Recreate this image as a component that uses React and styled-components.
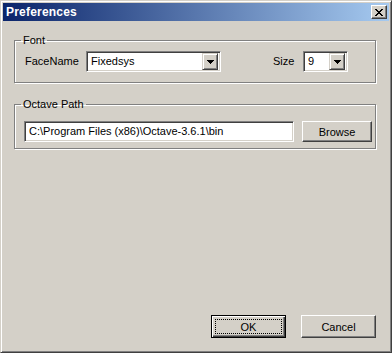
import React from 'react'
import styled, { createGlobalStyle } from 'styled-components'

const Global = createGlobalStyle`
    html, body {
        margin: 0;
        padding: 0;
        background: #d4d0c8;
    }
    * {
        box-sizing: border-box;
    }
`

const Window = styled.div`
    width: 392px;
    height: 353px;
    display: flex;
    flex-direction: column;
    background: #d4d0c8;
    border: 1px solid;
    border-color: #d4d0c8 #404040 #404040 #d4d0c8;
    box-shadow: inset 1px 1px #fff, inset -1px -1px #808080;
    padding: 2px;
    font-family: "Liberation Sans", Arial, sans-serif;
    font-size: 11px;
    color: #000;
`

const TitleBar = styled.div`
    height: 18px;
    display: flex;
    align-items: center;
    justify-content: space-between;
    padding: 0 2px 0 3px;
    background: linear-gradient(to right, #0a246a, #a6caf0);
`

const Title = styled.span`
    color: #fff;
    font-weight: bold;
    font-size: 12px;
    letter-spacing: 0.2px;
    line-height: 18px;
`

const CloseBtn = styled.button`
    width: 16px;
    height: 14px;
    padding: 0;
    display: flex;
    align-items: center;
    justify-content: center;
    background: #d4d0c8;
    border: 1px solid;
    border-color: #fff #404040 #404040 #fff;
    box-shadow: inset -1px -1px #808080;
`

const Body = styled.div`
    flex: 1;
    display: flex;
    flex-direction: column;
    padding: 13px 13px 12px 11px;
`

const Group = styled.fieldset`
    width: 362px;
    margin: 0 0 ${props => props.$gap || 0}px 0;
    padding: 0;
    min-width: 0;
    border: 1px solid #808080;
    box-shadow: inset 1px 1px #fff, 1px 1px #fff;
`

const Legend = styled.legend`
    margin-left: 6px;
    padding: 0 2px;
    line-height: 13px;
    font-size: 11px;
`

const Row = styled.div`
    display: flex;
    align-items: center;
    padding: ${props => props.$pad};
`

const Label = styled.span`
    width: ${props => props.$w}px;
    margin-left: ${props => props.$ml || 0}px;
    line-height: 13px;
`

const Sunken = styled.div`
    height: 21px;
    width: ${props => props.$w}px;
    display: flex;
    align-items: center;
    background: #fff;
    border: 1px solid;
    border-color: #808080 #fff #fff #808080;
    box-shadow: inset 1px 1px #404040, inset -1px -1px #d4d0c8;
    padding: 2px;
`

const FieldText = styled.span`
    flex: 1;
    padding-left: 2px;
    white-space: nowrap;
    overflow: hidden;
    line-height: 17px;
`

const DropBtn = styled.span`
    width: 16px;
    height: 17px;
    display: flex;
    align-items: center;
    justify-content: center;
    background: #d4d0c8;
    border: 1px solid;
    border-color: #d4d0c8 #404040 #404040 #d4d0c8;
    box-shadow: inset 1px 1px #fff, inset -1px -1px #808080;
`

const Button = styled.button`
    width: ${props => props.$w || 75}px;
    height: ${props => props.$h || 23}px;
    margin-left: ${props => props.$ml || 0}px;
    padding: 0;
    position: relative;
    font-family: "Liberation Sans", Arial, sans-serif;
    font-size: 11px;
    color: #000;
    background: #d4d0c8;
    border: 1px solid;
    border-color: ${props => props.$default ? '#000' : '#fff #404040 #404040 #fff'};
    box-shadow: ${props => props.$default
        ? 'inset 1px 1px #fff, inset -1px -1px #404040, inset -2px -2px #808080'
        : 'inset -1px -1px #808080'};
`

const Focus = styled.span`
    position: absolute;
    inset: 3px;
    border: 1px dotted #000;
    display: flex;
    align-items: center;
    justify-content: center;
`

const Footer = styled.div`
    margin-top: auto;
    display: flex;
    justify-content: flex-end;
`

const pixels = (rows) => {
    let d = ''
    rows.forEach((r, y) => {
        r.split('').forEach((c, x) => {
            if (c === '#') d += `M${x} ${y}h1v1h-1z`
        })
    })
    return d
}

const CloseGlyph = () => (
    <svg width="8" height="7" viewBox="0 0 8 7" shapeRendering="crispEdges">
        <path fill="#000" d={pixels([
            '##....##',
            '.##..##.',
            '..####..',
            '...##...',
            '..####..',
            '.##..##.',
            '##....##',
        ])} />
    </svg>
)

const Arrow = () => (
    <svg width="7" height="4" viewBox="0 0 7 4" shapeRendering="crispEdges">
        <path fill="#000" d={pixels([
            '#######',
            '.#####.',
            '..###..',
            '...#...',
        ])} />
    </svg>
)

function Combo({ width, value }) {
    return (
        <Sunken $w={width}>
            <FieldText>{value}</FieldText>
            <DropBtn><Arrow /></DropBtn>
        </Sunken>
    )
}

export default function App() {
    return (
        <>
            <Global />
            <Window>
                <TitleBar>
                    <Title>Preferences</Title>
                    <CloseBtn><CloseGlyph /></CloseBtn>
                </TitleBar>
                <Body>
                    <Group $gap={15}>
                        <Legend>Font</Legend>
                        <Row $pad="4px 0 10px 10px">
                            <Label $w={61}>FaceName</Label>
                            <Combo width={135} value="Fixedsys" />
                            <Label $w={30} $ml={52}>Size</Label>
                            <Combo width={45} value="9" />
                        </Row>
                    </Group>
                    <Group>
                        <Legend>Octave Path</Legend>
                        <Row $pad="10px 0 6px 9px">
                            <Sunken $w={270}>
                                <FieldText>C:\Program Files (x86)\Octave-3.6.1\bin</FieldText>
                            </Sunken>
                            <Button $w={70} $h={21} $ml={8}>Browse</Button>
                        </Row>
                    </Group>
                    <Footer>
                        <Button $default><Focus>OK</Focus></Button>
                        <Button $ml={15}>Cancel</Button>
                    </Footer>
                </Body>
            </Window>
        </>
    )
}
